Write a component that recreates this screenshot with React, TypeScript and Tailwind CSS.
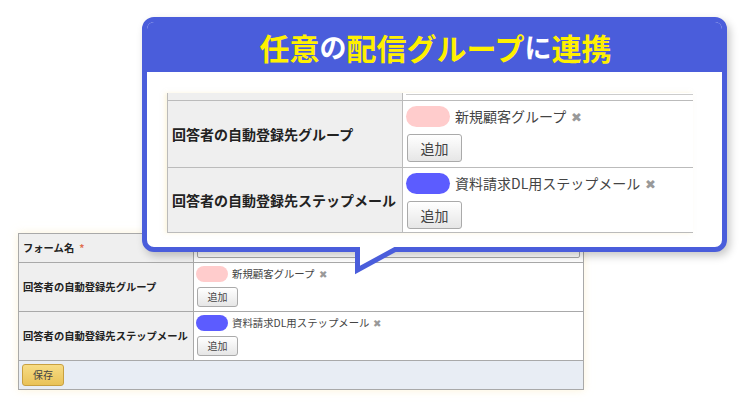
import React from "react";

const jp = { fontFamily: '"Noto Sans CJK JP", "Noto Sans", sans-serif' };

function SmallRow({
  label,
  tag,
  color,
}: {
  label: string;
  tag: string;
  color: string;
}) {
  return (
    <div className="flex h-[49px] border-b border-[#a9a9a9]">
      <div className="flex w-[175px] shrink-0 items-center border-r border-[#a9a9a9] bg-[#efefef] pl-[4px] text-[10.3px] font-bold text-[#222]">
        {label}
      </div>
      <div className="flex flex-col items-start pl-[2px] pt-[3px]">
        <div className="flex items-center gap-[4px]">
          <span className={`h-[16px] w-[32px] rounded-full ${color}`} />
          <span className="text-[10.4px] leading-[16px] text-[#444]">{tag}</span>
          <span className="text-[9.5px] leading-[16px] text-[#999]">✖</span>
        </div>
        <button className="ml-[1px] mt-[5px] h-[20px] w-[41px] rounded-[3px] border border-[#aaa] bg-gradient-to-b from-white to-[#e6e6e6] text-[10px] leading-none text-[#444]">
          追加
        </button>
      </div>
    </div>
  );
}

function BigRow({
  label,
  tag,
  color,
  h,
}: {
  label: string;
  tag: string;
  color: string;
  h: string;
}) {
  return (
    <div className={`flex ${h} border-b border-[#bbb]`}>
      <div className="flex w-[235px] shrink-0 items-center border-r border-[#bbb] bg-[#efefef] pl-[4px] text-[14px] font-bold text-[#222]">
        {label}
      </div>
      <div className="flex flex-col items-start pl-[3px] pt-[5px]">
        <div className="flex items-center gap-[5px]">
          <span className={`h-[21px] w-[44px] rounded-full ${color}`} />
          <span className="text-[14px] leading-[21px] text-[#444]">{tag}</span>
          <span className="text-[13px] leading-[21px] text-[#999]">✖</span>
        </div>
        <button className="ml-[1px] mt-[7px] h-[28px] w-[55px] rounded-[3px] border border-[#aaa] bg-gradient-to-b from-white to-[#e6e6e6] text-[14px] leading-none text-[#444]">
          追加
        </button>
      </div>
    </div>
  );
}

export default function App() {
  return (
    <div className="relative h-[420px] w-[742px] overflow-hidden bg-white" style={jp}>
      {/* underlying form */}
      <div className="pl-[18px] pt-[233px]">
        <div className="w-[566px] border border-[#a9a9a9] shadow-[0_0_8px_rgba(250,235,190,0.6)]">
          <div className="flex h-[29px] border-b border-[#a9a9a9]">
            <div className="flex w-[175px] shrink-0 items-center border-r border-[#a9a9a9] bg-[#efefef] pl-[4px] text-[10.3px] font-bold text-[#222]">
              フォーム名<span className="ml-[5px] text-[#e07050]">*</span>
            </div>
            <div className="flex-1 pl-[3px] pr-[3px] pt-[3px]">
              <div className="h-[21px] rounded-[2px] border border-[#aaa] bg-white" />
            </div>
          </div>
          <SmallRow label="回答者の自動登録先グループ" tag="新規顧客グループ" color="bg-[#ffcccc]" />
          <SmallRow label="回答者の自動登録先ステップメール" tag="資料請求DL用ステップメール" color="bg-[#5c5cff]" />
          <div className="flex h-[28px] items-center bg-[#e8edf4] pl-[3px]">
            <button className="h-[22px] w-[42px] rounded-[3px] border border-[#c8a040] bg-gradient-to-b from-[#f7dc84] to-[#e9c257] text-[10px] leading-none text-[#444]">
              保存
            </button>
          </div>
        </div>
      </div>

      {/* callout */}
      <div className="absolute left-[142px] top-[17px] flex h-[235px] w-[585px] flex-col overflow-hidden rounded-[12px] border-[5px] border-[#4a5ddb] bg-white shadow-[3px_4px_8px_rgba(0,0,0,0.22)]">
        <div className="flex h-[50px] shrink-0 items-center justify-center bg-[#4a5ddb] pl-[2px] font-bold">
          <span className="text-[30px] text-[#fff000]">任意</span>
          <span className="text-[27px] text-white">の</span>
          <span className="text-[30px] text-[#fff000]">配信グループ</span>
          <span className="text-[27px] text-white">に</span>
          <span className="text-[30px] text-[#fff000]">連携</span>
        </div>
        <div className="pl-[20px] pt-[21px]">
          <div className="w-[526px] border-l border-[#bbb] shadow-[-2px_0_4px_rgba(250,235,190,0.5)]">
            <div className="flex h-[8px] border-b border-[#bbb]">
              <div className="w-[235px] shrink-0 border-r border-[#bbb] bg-[#efefef]" />
              <div className="flex-1 pl-[3px]">
                <div className="h-[2px] border-b border-[#ccc]" />
              </div>
            </div>
            <BigRow label="回答者の自動登録先グループ" tag="新規顧客グループ" color="bg-[#ffcccc]" h="h-[67px]" />
            <BigRow label="回答者の自動登録先ステップメール" tag="資料請求DL用ステップメール" color="bg-[#5c5cff]" h="h-[65px]" />
          </div>
        </div>
      </div>

      {/* tail */}
      <svg className="absolute left-[345px] top-[240px]" width="60" height="40" viewBox="0 0 60 40">
        <polygon points="12.5,4 53,4 50,9.5 12.5,30" fill="white" />
        <polyline
          points="12.5,7 12.5,30 50,9.5 55,9.5"
          fill="none"
          stroke="#4a5ddb"
          strokeWidth="5"
          strokeLinejoin="miter"
        />
      </svg>
    </div>
  );
}
